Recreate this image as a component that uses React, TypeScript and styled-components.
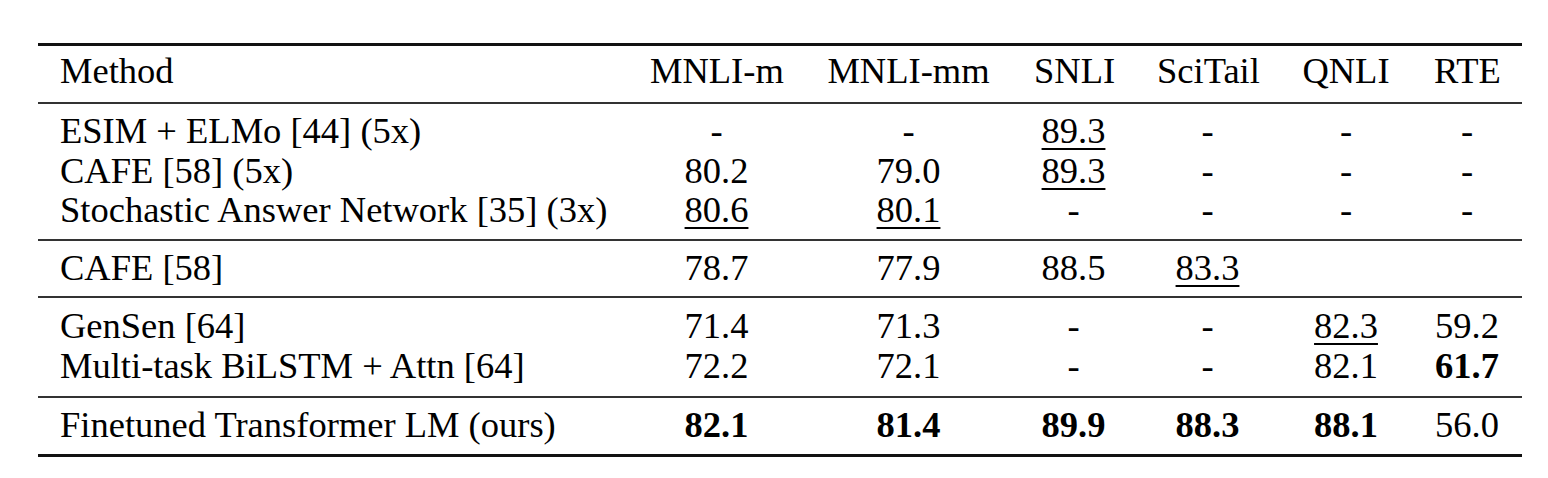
import styled, { createGlobalStyle } from 'styled-components'

type Value = {
  text: string
  bold?: boolean
  underline?: boolean
}

type Row = {
  method: string
  values: (Value | null)[]
}

const GlobalStyle = createGlobalStyle`
  body {
    margin: 0;
    background: #ffffff;
  }
`

const Page = styled.div`
  padding: 43px 26px 0 38px;
  font-family: 'Liberation Serif', 'Times New Roman', serif;
  color: #000000;
`

const Table = styled.table`
  width: 1484px;
  border-collapse: collapse;
  table-layout: fixed;
  font-size: 36.5px;
  border-top: 3px solid #111111;
  border-bottom: 3px solid #111111;
`

const Group = styled.tbody<{ $rowHeight: number; $pad: number }>`
  border-top: 2px solid #333333;

  td {
    height: ${({ $rowHeight }) => $rowHeight}px;
    line-height: ${({ $rowHeight }) => $rowHeight}px;
  }

  tr:first-child td {
    padding-top: ${({ $pad }) => $pad - 1}px;
  }

  tr:last-child td {
    padding-bottom: ${({ $pad }) => $pad + 1}px;
  }
`

const HeadCell = styled.th<{ $align: 'left' | 'center' }>`
  height: 50px;
  padding: 0 22px 6px;
  line-height: 50px;
  font-weight: 400;
  text-align: ${({ $align }) => $align};
  white-space: nowrap;
`

const Cell = styled.td<{ $align: 'left' | 'center' }>`
  padding: 0 22px;
  text-align: ${({ $align }) => $align};
  white-space: nowrap;
`

const Score = styled.span<{ $bold: boolean; $underline: boolean }>`
  font-weight: ${({ $bold }) => ($bold ? 700 : 400)};
  text-decoration: ${({ $underline }) => ($underline ? 'underline' : 'none')};
  text-decoration-thickness: 2px;
  text-underline-offset: 5px;
`

const columns = ['MNLI-m', 'MNLI-mm', 'SNLI', 'SciTail', 'QNLI', 'RTE']
const widths = [590, 177, 207, 123, 145, 132, 110]

const v = (text: string, bold = false, underline = false): Value => ({
  text,
  bold,
  underline,
})

const groups: { rowHeight: number; pad: number; rows: Row[] }[] = [
  {
    rowHeight: 39.5,
    pad: 8,
    rows: [
      {
        method: 'ESIM + ELMo [44] (5x)',
        values: [v('-'), v('-'), v('89.3', false, true), v('-'), v('-'), v('-')],
      },
      {
        method: 'CAFE [58] (5x)',
        values: [v('80.2'), v('79.0'), v('89.3', false, true), v('-'), v('-'), v('-')],
      },
      {
        method: 'Stochastic Answer Network [35] (3x)',
        values: [v('80.6', false, true), v('80.1', false, true), v('-'), v('-'), v('-'), v('-')],
      },
    ],
  },
  {
    rowHeight: 39.5,
    pad: 8,
    rows: [
      {
        method: 'CAFE [58]',
        values: [v('78.7'), v('77.9'), v('88.5'), v('83.3', false, true), null, null],
      },
    ],
  },
  {
    rowHeight: 40,
    pad: 9,
    rows: [
      {
        method: 'GenSen [64]',
        values: [v('71.4'), v('71.3'), v('-'), v('-'), v('82.3', false, true), v('59.2')],
      },
      {
        method: 'Multi-task BiLSTM + Attn [64]',
        values: [v('72.2'), v('72.1'), v('-'), v('-'), v('82.1'), v('61.7', true)],
      },
    ],
  },
  {
    rowHeight: 40,
    pad: 8,
    rows: [
      {
        method: 'Finetuned Transformer LM (ours)',
        values: [
          v('82.1', true),
          v('81.4', true),
          v('89.9', true),
          v('88.3', true),
          v('88.1', true),
          v('56.0'),
        ],
      },
    ],
  },
]

export default function App() {
  return (
    <Page>
      <GlobalStyle />
      <Table>
        <colgroup>
          {widths.map((w, i) => (
            <col key={i} style={{ width: w }} />
          ))}
        </colgroup>
        <thead>
          <tr>
            <HeadCell $align="left">Method</HeadCell>
            {columns.map((c) => (
              <HeadCell key={c} $align="center">
                {c}
              </HeadCell>
            ))}
          </tr>
        </thead>
        {groups.map((g, gi) => (
          <Group key={gi} $rowHeight={g.rowHeight} $pad={g.pad}>
            {g.rows.map((row) => (
              <tr key={row.method}>
                <Cell $align="left">{row.method}</Cell>
                {row.values.map((val, i) => (
                  <Cell key={i} $align="center">
                    {val && (
                      <Score $bold={!!val.bold} $underline={!!val.underline}>
                        {val.text}
                      </Score>
                    )}
                  </Cell>
                ))}
              </tr>
            ))}
          </Group>
        ))}
      </Table>
    </Page>
  )
}
